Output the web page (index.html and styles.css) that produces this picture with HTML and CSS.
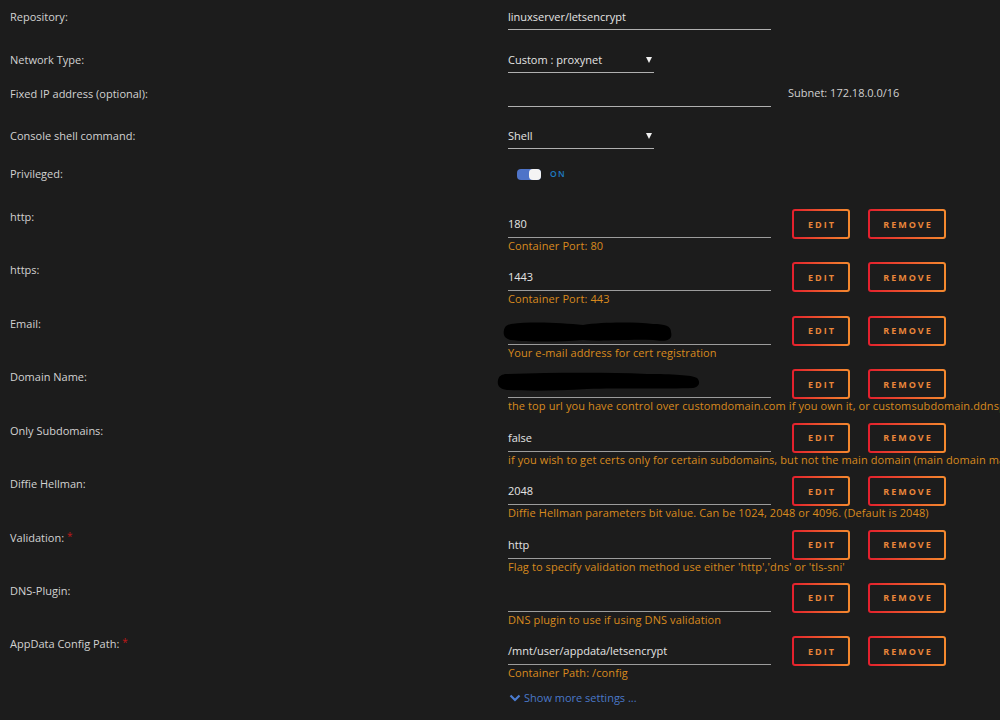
FILE: index.html
```html
<!DOCTYPE html>
<html lang="en">
<head>
    <meta charset="UTF-8">
    <meta name="viewport" content="width=device-width, initial-scale=1.0">
    <title>Update Container</title>
    <link rel="stylesheet" href="styles.css">
</head>
<body>
    <div class="form">
        <div class="row row-repo">
            <div class="label">Repository:</div>
            <div class="field"><div class="value">linuxserver/letsencrypt</div></div>
        </div>

        <div class="row row-net">
            <div class="label">Network Type:</div>
            <div class="field">
                <div class="value select">Custom : proxynet <span class="arrow"></span></div>
            </div>
        </div>

        <div class="row row-ip">
            <div class="label">Fixed IP address (optional):</div>
            <div class="field"><div class="value"></div></div>
            <div class="extra">Subnet: 172.18.0.0/16</div>
        </div>

        <div class="row row-shell">
            <div class="label">Console shell command:</div>
            <div class="field">
                <div class="value select">Shell <span class="arrow"></span></div>
            </div>
        </div>

        <div class="row row-priv">
            <div class="label">Privileged:</div>
            <div class="field">
                <div class="switch">
                    <span class="track"><span class="knob"></span></span>
                    <span class="switch-text">ON</span>
                </div>
            </div>
        </div>

        <!-- config entries -->
        <div class="row row-port">
            <div class="label">http:</div>
            <div class="field">
                <div class="value">180</div>
                <div class="help">Container Port: 80</div>
            </div>
            <div class="actions"><button class="btn btn-edit">EDIT</button><button class="btn btn-remove">REMOVE</button></div>
        </div>

        <div class="row row-port">
            <div class="label">https:</div>
            <div class="field">
                <div class="value">1443</div>
                <div class="help">Container Port: 443</div>
            </div>
            <div class="actions"><button class="btn btn-edit">EDIT</button><button class="btn btn-remove">REMOVE</button></div>
        </div>

        <div class="row row-port">
            <div class="label">Email:</div>
            <div class="field">
                <div class="value"></div>
                <svg class="redact redact-email" width="172" height="24" viewBox="0 0 172 24">
                    <path d="M8 4 C30 1 60 3 80 5 C100 2 130 2 150 4 C162 4 168 6 168 12 C170 20 164 22 150 20 C120 19 100 22 80 20 C55 22 25 22 8 20 C1 19 0 14 1 10 C2 6 4 5 8 4 Z" fill="#000"/>
                </svg>
                <div class="help">Your e-mail address for cert registration</div>
            </div>
            <div class="actions"><button class="btn btn-edit">EDIT</button><button class="btn btn-remove">REMOVE</button></div>
        </div>

        <div class="row row-port">
            <div class="label">Domain Name:</div>
            <div class="field">
                <div class="value"></div>
                <svg class="redact redact-domain" width="204" height="20" viewBox="0 0 204 20">
                    <path d="M8 2 C50 1 100 0 150 2 C175 2 195 3 200 6 C204 10 202 15 196 16 C170 17 120 16 90 17 C60 19 30 19 10 18 C2 17 0 13 1 8 C2 4 4 3 8 2 Z" fill="#000"/>
                </svg>
                <div class="help">the top url you have control over customdomain.com if you own it, or customsubdomain.ddnsprovider.com if dynamic dns</div>
            </div>
            <div class="actions"><button class="btn btn-edit">EDIT</button><button class="btn btn-remove">REMOVE</button></div>
        </div>

        <div class="row row-port">
            <div class="label">Only Subdomains:</div>
            <div class="field">
                <div class="value">false</div>
                <div class="help">if you wish to get certs only for certain subdomains, but not the main domain (main domain may be hosted on another machine)</div>
            </div>
            <div class="actions"><button class="btn btn-edit">EDIT</button><button class="btn btn-remove">REMOVE</button></div>
        </div>

        <div class="row row-port">
            <div class="label">Diffie Hellman:</div>
            <div class="field">
                <div class="value">2048</div>
                <div class="help">Diffie Hellman parameters bit value. Can be 1024, 2048 or 4096. (Default is 2048)</div>
            </div>
            <div class="actions"><button class="btn btn-edit">EDIT</button><button class="btn btn-remove">REMOVE</button></div>
        </div>

        <div class="row row-port">
            <div class="label">Validation: <span class="req">*</span></div>
            <div class="field">
                <div class="value">http</div>
                <div class="help">Flag to specify validation method use either 'http','dns' or 'tls-sni'</div>
            </div>
            <div class="actions"><button class="btn btn-edit">EDIT</button><button class="btn btn-remove">REMOVE</button></div>
        </div>

        <div class="row row-port">
            <div class="label">DNS-Plugin:</div>
            <div class="field">
                <div class="value"></div>
                <div class="help">DNS plugin to use if using DNS validation</div>
            </div>
            <div class="actions"><button class="btn btn-edit">EDIT</button><button class="btn btn-remove">REMOVE</button></div>
        </div>

        <div class="row row-port">
            <div class="label">AppData Config Path: <span class="req">*</span></div>
            <div class="field">
                <div class="value">/mnt/user/appdata/letsencrypt</div>
                <div class="help">Container Path: /config</div>
            </div>
            <div class="actions"><button class="btn btn-edit">EDIT</button><button class="btn btn-remove">REMOVE</button></div>
        </div>

        <div class="more">
            <svg width="12" height="8" viewBox="0 0 12 8"><polyline points="1.5,1.5 6,6 10.5,1.5" fill="none" stroke="#4a7bd0" stroke-width="2.2"/></svg>
            <span>Show more settings ...</span>
        </div>
    </div>
</body>
</html>
```

FILE: styles.css
```css
* {
    margin: 0;
    padding: 0;
    box-sizing: border-box;
}

body {
    font-family: 'Open Sans', 'Noto Sans', Arial, sans-serif;
    font-size: 11px;
    line-height: 14px;
    background-color: #1c1c1c;
    color: #d0d0d0;
    overflow: hidden;
}

.form {
    padding-top: 10px;
    overflow: hidden;
}

.row {
    display: grid;
    grid-template-columns: 498px 263px auto;
    padding-left: 10px;
}

.row-repo { height: 43px; }
.row-net { height: 34px; }
.row-ip { height: 42px; }
.row-shell { height: 38px; }
.row-priv { height: 43px; }
.row-port { height: 53.43px; }

.label {
    color: #d2d2d2;
}

.req {
    color: #c01818;
    font-size: 10px;
    vertical-align: top;
    line-height: 10px;
}

.field {
    position: relative;
}

.value {
    height: 20px;
    padding-bottom: 5px;
    border-bottom: 1px solid #b0b0b0;
    color: #e4e4e4;
    white-space: nowrap;
}

.value.select {
    width: 146px;
    position: relative;
}

/* little select caret */
.arrow {
    position: absolute;
    right: 2px;
    top: 4px;
    width: 0;
    height: 0;
    border-left: 3px solid transparent;
    border-right: 3px solid transparent;
    border-top: 6px solid #f0f0f0;
}

.extra {
    padding-left: 17px;
    color: #d0d0d0;
    white-space: nowrap;
}

.row-ip .extra {
    margin-top: -1px;
}

.switch {
    display: flex;
    align-items: center;
    gap: 9px;
    padding-left: 9px;
}

.track {
    display: block;
    width: 24px;
    height: 11px;
    border-radius: 4px;
    background-color: #4f74c8;
    position: relative;
}

.knob {
    position: absolute;
    right: 0;
    top: 0;
    width: 12px;
    height: 11px;
    border-radius: 4px;
    background-color: #f4f4f4;
}

.switch-text {
    color: #1f7cc4;
    font-size: 8.5px;
    font-weight: 600;
    letter-spacing: 1.2px;
}

.row-port .field {
    padding-top: 7px;
}

.row-port .value {
    height: 21px;
    padding-bottom: 6px;
    border-bottom-color: #9c9c9c;
}

.help {
    margin-top: 1px;
    color: #d88a1e;
    white-space: nowrap;
    letter-spacing: 0.1px;
}

.redact {
    position: absolute;
    display: block;
}

.redact-email {
    left: -5px;
    top: 3px;
}

.redact-domain {
    left: -11px;
    top: 2px;
}

.actions {
    display: flex;
    gap: 18px;
    padding-left: 21px;
    margin-top: -1px;
    align-items: flex-start;
}

.btn {
    height: 30px;
    border: 2px solid transparent;
    border-radius: 3px;
    background: linear-gradient(#1c1c1c, #1c1c1c) padding-box,
                linear-gradient(90deg, #e31f2d, #f58a2e) border-box;
    color: #ea863a;
    font-family: 'Open Sans', 'Noto Sans', Arial, sans-serif;
    font-size: 9px;
    font-weight: 700;
    letter-spacing: 2px;
    padding-left: 2px;
    cursor: pointer;
}

.btn-edit { width: 58px; }
.btn-remove { width: 78px; }

.more {
    display: flex;
    align-items: center;
    gap: 3px;
    padding-left: 509px;
    color: #4a78c8;
}

.more svg {
    display: block;
}
```
